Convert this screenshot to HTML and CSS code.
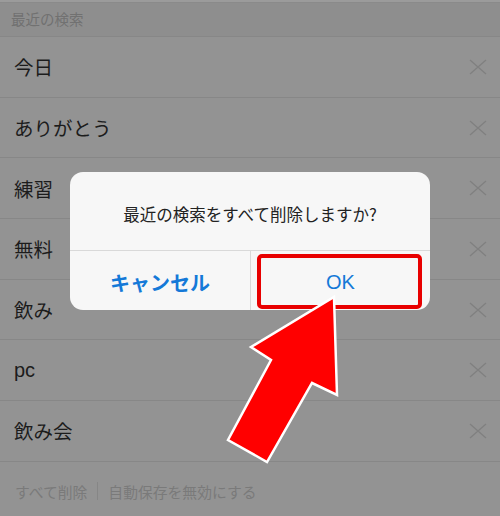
FILE: index.html
```html
<!DOCTYPE html>
<html lang="ja">
<head>
<meta charset="utf-8">
<link rel="stylesheet" href="styles.css">
</head>
<body>
<div class="screen">
  <div class="topline"></div>
  <div class="section-head">最近の検索</div>
  <ul class="list">
    <li class="row"><span class="term">今日</span><svg class="x" viewBox="0 0 18 16"><path d="M1 1L17 15M17 1L1 15"/></svg></li>
    <li class="row"><span class="term">ありがとう</span><svg class="x" viewBox="0 0 18 16"><path d="M1 1L17 15M17 1L1 15"/></svg></li>
    <li class="row"><span class="term">練習</span><svg class="x" viewBox="0 0 18 16"><path d="M1 1L17 15M17 1L1 15"/></svg></li>
    <li class="row"><span class="term">無料</span><svg class="x" viewBox="0 0 18 16"><path d="M1 1L17 15M17 1L1 15"/></svg></li>
    <li class="row"><span class="term">飲み</span><svg class="x" viewBox="0 0 18 16"><path d="M1 1L17 15M17 1L1 15"/></svg></li>
    <li class="row"><span class="term latin">pc</span><svg class="x" viewBox="0 0 18 16"><path d="M1 1L17 15M17 1L1 15"/></svg></li>
    <li class="row"><span class="term">飲み会</span><svg class="x" viewBox="0 0 18 16"><path d="M1 1L17 15M17 1L1 15"/></svg></li>
  </ul>
  <div class="footer">
    <span class="foot-link">すべて削除</span>
    <span class="foot-sep"></span>
    <span class="foot-link">自動保存を無効にする</span>
  </div>

  <div class="alert">
    <div class="alert-msg">最近の検索をすべて削除しますか?</div>
    <div class="alert-buttons">
      <div class="btn btn-cancel">キャンセル</div>
      <div class="btn btn-ok">OK</div>
    </div>
    <div class="highlight"></div>
  </div>

  <svg class="arrow" viewBox="0 0 500 516" width="500" height="516">
    <polygon points="334,297 337,395 312,383 267,462 228,440 271,360 251,347" fill="#ff0000" stroke="#ffffff" stroke-width="2.5" stroke-linejoin="miter"/>
  </svg>
</div>
</body>
</html>
```

FILE: styles.css
```css
* { box-sizing: border-box; }
html, body { margin: 0; padding: 0; }
body {
  background: #939393;
  font-family: "Noto Sans CJK JP", "Liberation Sans", sans-serif;
}
.screen {
  position: relative;
  width: 500px;
  height: 516px;
  overflow: hidden;
  background: #939393;
}
.topline {
  height: 3px;
  background: #9b9b9b;
  border-bottom: 1px solid #8a8a8a;
}
.section-head {
  height: 33px;
  background: #8e8e8e;
  color: #717171;
  font-size: 14.5px;
  padding-left: 11px;
  display: flex;
  align-items: center;
  padding-bottom: 3px;
}
.list {
  list-style: none;
  margin: 0;
  padding: 0;
}
.row {
  height: 60.7px;
  border-top: 1px solid #878787;
  display: flex;
  align-items: center;
  justify-content: space-between;
  padding: 0 13px 0 14px;
}
.term {
  font-size: 19.5px;
  color: #1c1c1c;
}
.term.latin {
  font-family: "Liberation Sans", "Noto Sans CJK JP", sans-serif;
  font-size: 20px;
}
.x {
  width: 18px;
  height: 16px;
  fill: none;
  stroke: #808080;
  stroke-width: 1.4;
}
.footer {
  border-top: 1px solid #878787;
  height: 60px;
  display: flex;
  align-items: center;
  padding: 0 0 0 15px;
  color: #7a7a7a;
  font-size: 14.8px;
}
.foot-sep {
  width: 1px;
  height: 18px;
  background: #868686;
  margin: 0 10px 0 10px;
}
.alert {
  position: absolute;
  left: 70px;
  top: 172px;
  width: 360px;
  height: 138px;
  background: #f7f7f7;
  border-radius: 13px;
  display: flex;
  flex-direction: column;
}
.alert-msg {
  height: 79px;
  display: flex;
  align-items: center;
  justify-content: center;
  font-size: 16.5px;
  color: #222;
  border-bottom: 1px solid #d9d9d9;
  padding-top: 6px;
}
.alert-buttons {
  flex: 1;
  display: flex;
}
.btn {
  display: flex;
  align-items: center;
  justify-content: center;
  color: #1479d8;
  font-size: 20px;
  padding-top: 3px;
}
.btn-cancel {
  flex: 0 0 181px;
  font-weight: 700;
  border-right: 1px solid #d9d9d9;
}
.btn-ok {
  flex: 1;
  font-family: "Liberation Sans", "Noto Sans CJK JP", sans-serif;
}
.highlight {
  position: absolute;
  left: 187px;
  top: 82px;
  width: 165px;
  height: 55px;
  border: 4px solid #e80000;
  border-radius: 5px;
}
.arrow {
  position: absolute;
  left: 0;
  top: 0;
}
```
